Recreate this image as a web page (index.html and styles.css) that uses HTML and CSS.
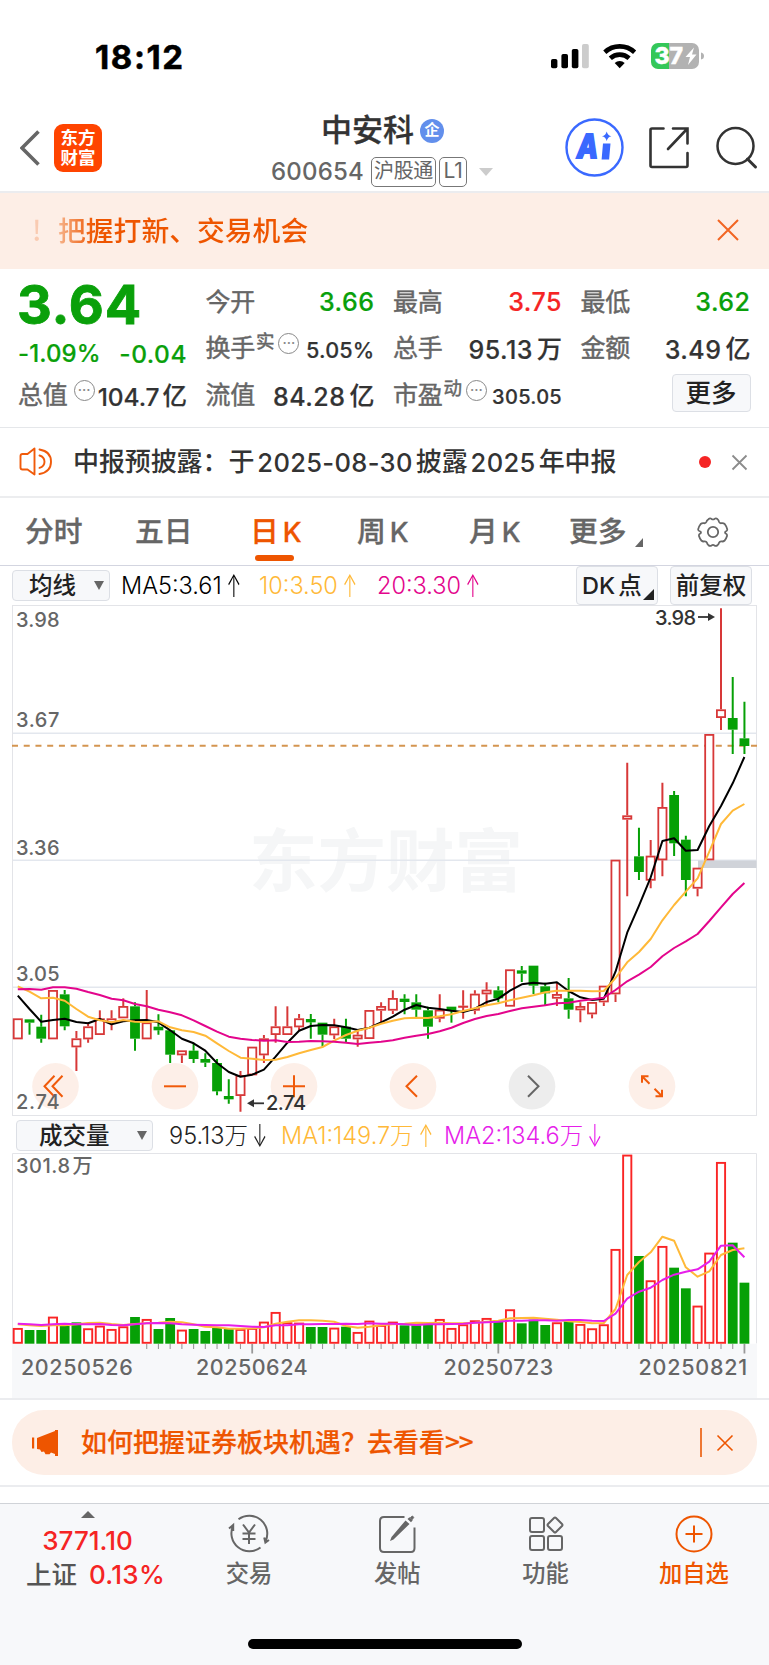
FILE: index.html
```html
<!DOCTYPE html>
<html lang="zh-CN">
<head>
<meta charset="utf-8">
<title>中安科 600654</title>
<link rel="stylesheet" href="styles.css">
</head>
<body>
<div class="statusbar">
  <span class="clock">18:12</span>
  <svg class="status-icons" width="154" height="30" viewBox="0 0 154 30">
    <rect x="1" y="17" width="6.4" height="9.3" rx="1.8"/><rect x="11.4" y="12" width="6.6" height="14.3" rx="1.8"/><rect x="21.8" y="7" width="6.6" height="19.3" rx="1.8"/><rect x="32" y="2" width="6.8" height="24.3" rx="1.8" fill="#ccc"/>
    <g fill="none" stroke="#000" stroke-width="4.6"><path d="M54.8 10.2a22 22 0 0 1 29.8 0"/><path d="M60.3 16.3a13.8 13.8 0 0 1 18.8 0"/></g><path d="M69.7 26.2l-5-5.2a7.4 7.4 0 0 1 10 0z"/>
    <path d="M109 1h-1a7 7 0 0 0-7 7v12a7 7 0 0 0 7 7h11V1z" fill="#34c759"/><path d="M119 1h23a7 7 0 0 1 7 7v12a7 7 0 0 1-7 7h-23z" fill="#b2b2b2"/><path d="M151 10.5q3 .5 3 3.5t-3 3.500z" fill="#b2b2b2"/>
    <text class="batt" x="104.500" y="22">37</text><path d="M144 5.500l-8.500 9.500h4.500l-2 8 8.500-10.500h-4.500z" fill="#fff"/>
  </svg>
</div>

<header class="header">
  <svg class="back" width="20" height="36" viewBox="0 0 20 36"><path d="M18.500 1.500L2 18l16.500 16.500" fill="none" stroke="#666" stroke-width="3.600"/></svg>
  <div class="logo">东方<br>财富</div>
  <div class="title">
    <div class="name">中安科<span class="badge">企</span></div>
    <div class="code">600654<span class="tag">沪股通</span><span class="tag l1">L1</span><i class="caret"></i></div>
  </div>
  <svg class="ai" width="59" height="59" viewBox="0 0 59 59"><circle cx="29.500" cy="29.500" r="28" fill="none" stroke="#3a69ff" stroke-width="2.400"/><text x="12" y="40" textLength="21" lengthAdjust="spacingAndGlyphs">A</text><path d="M38 25.500h7.500l-1.400 16h-7.500zM41.700 13.500q1 4.200 4.700 4.700-3.700 .6-4.700 4.800-1-4.200-4.700-4.800 3.700-.5 4.700-4.700z" fill="#3a69ff"/></svg>
  <svg class="share" width="42" height="44" viewBox="0 0 42 44"><path d="M15.500 2.500H4q-1.500 0-1.500 1.500v35.500q0 1.500 1.500 1.500h34q1.500 0 1.500-1.500V27M25 2.500h14.500V17.500M39 3L20 23" fill="none" stroke="#333" stroke-width="2.600" stroke-linecap="round"/></svg>
  <svg class="search" width="44" height="44" viewBox="0 0 44 44"><circle cx="20.500" cy="20" r="18" fill="none" stroke="#333" stroke-width="2.500"/><path d="M32.500 33l8 8" stroke="#333" stroke-width="3" stroke-linecap="round"/></svg>
</header>

<div class="banner"><span class="bang">!</span><span class="banner-text">把握打新、交易机会</span>
  <svg width="24" height="24" viewBox="0 0 24 24"><path d="M2 2l20 20M22 2L2 22" stroke="#f26522" stroke-width="2"/></svg>
</div>

<section class="quote">
  <div class="price">3.64</div>
  <div class="q r1 c2"><span>今开</span><b class="green">3.66</b></div>
  <div class="q r1 c3"><span>最高</span><b class="red">3.75</b></div>
  <div class="q r1 c4"><span>最低</span><b class="green">3.62</b></div>
  <div class="q r2 c1 green change"><b class="pct">-1.09%</b><b class="chg">-0.04</b></div>
  <div class="q r2 c2"><span>换手<sup>实</sup></span><i class="more-dot">···</i><b class="small">5.05%</b></div>
  <div class="q r2 c3"><span>总手</span><b>95.13<u>万</u></b></div>
  <div class="q r2 c4"><span>金额</span><b>3.49<u>亿</u></b></div>
  <div class="q r3 c1"><span>总值</span><i class="more-dot gap">···</i><b class="mid">104.7<u>亿</u></b></div>
  <div class="q r3 c2"><span>流值</span><b>84.28<u>亿</u></b></div>
  <div class="q r3 c3"><span>市盈<sup>动</sup></span><i class="more-dot">···</i><b class="small pe">305.05</b></div>
  <div class="more-btn">更多</div>
</section>

<div class="news">
  <svg width="36" height="30" viewBox="0 0 36 30" fill="none" stroke="#f05a0a" stroke-width="1.900" stroke-linejoin="round" stroke-linecap="round"><path d="M15.500 1.500L8.500 7H3.500Q1.500 7 1.500 9v11.500q0 2 2 2h5l7 5z"/><path d="M20.500 8.500q5 1.500 5 6.200t-5 6.200M20.500 2.500q11.500 2 11.500 12.200T20.500 27"/></svg>
  <span class="news-text">中报预披露：于<em>2025-08-30</em>披露<em>2025</em>年中报</span>
  <i class="dot"></i>
  <svg width="17" height="17" viewBox="0 0 17 17"><path d="M1.500 1.500l14 14M15.500 1.500l-14 14" stroke="#8c8c8c" stroke-width="1.800"/></svg>
</div>

<nav class="tabs">
  <span>分时</span><span>五日</span><span class="active">日<em>K</em></span><span>周<em>K</em></span><span>月<em>K</em></span><span>更多<i class="corner"></i></span>
  <svg width="32" height="32" viewBox="0 0 32 32" fill="none" stroke="#666" stroke-width="1.800"><circle cx="16" cy="16" r="5.200"/><path d="M11.500 3.200q1.500-1.500 3-.3 1.500 1 3 0 1.500-1.200 3 .3 1.200 1.100 1.600 2.800.6 1.500 2.400 1.200 2-.3 3.200.8 2 2.500 2.600 5.400.1 1.400-1.600 2.100-1.300 1 0 2 1.600.8 1.400 2.300-.8 2.900-2.700 5-1.100.9-2.700.6-1.900-.3-2.600 1.300-.3 1.700-1.600 2.500-1.500 1.300-3 .2-1.500-1-3 0-1.500 1.100-3-.2-1.300-.8-1.600-2.500-.7-1.600-2.600-1.300-1.600.3-2.700-.6-1.900-2.100-2.700-5-.2-1.500 1.400-2.300 1.300-1 0-2Q1 14.800 1.100 13.400q.6-2.900 2.600-5.400 1.200-1.100 3.200-.8 1.800.3 2.400-1.200.4-1.700 2.200-2.800z"/></svg>
</nav>

<div class="row ma-row">
  <div class="select">均线<i class="down"></i></div>
  <span class="ind k">MA5:3.61<s>↑</s></span><span class="ind y">10:3.50<s>↑</s></span><span class="ind p">20:3.30<s>↑</s></span>
  <div class="btn dk"><em>DK</em>点<i class="corner"></i></div><div class="btn fq">前复权</div>
</div>
<svg id="price-chart" class="chart" width="769" height="512" viewBox="0 0 769 512"></svg>

<div class="row vol-row">
  <div class="select wide">成交量<i class="down"></i></div>
  <span class="ind g">95.13万<s>↓</s></span><span class="ind y">MA1:149.7万<s>↑</s></span><span class="ind v">MA2:134.6万<s>↓</s></span>
</div>
<svg id="volume-chart" class="chart" width="769" height="245" viewBox="0 0 769 245"></svg>

<div class="promo-wrap"><div class="promo">
  <svg width="32" height="28" viewBox="0 0 32 28" fill="#ee5500"><path d="M1 8.500h2.200v11H1zM6 9L24 2V1h3v26h-3v-2l-4-1.500-1.500 1.700h-4L13 22.500 10.500 23 9 20.500l-3-.5z"/></svg>
  <span class="promo-text">如何把握证券板块机遇？去看看<em>&gt;&gt;</em></span>
  <i class="bar"></i>
  <svg width="18" height="18" viewBox="0 0 18 18"><path d="M1.500 1.500l15 15M16.500 1.500l-15 15" stroke="#ee5500" stroke-width="1.600"/></svg>
</div></div>

<footer class="bottom">
  <div class="index"><i class="up"></i><b>3771.10</b><div>上证<b>0.13%</b></div></div>
  <div class="item"><svg width="44" height="40" viewBox="0 0 44 40" fill="none" stroke="#666" stroke-width="2"><path d="M11.500 5.300A18 18 0 0 1 38.500 27.500M33.500 33.500A18 18 0 0 1 6.200 11.500M2 14.500l4.200-3.500 0 6M37.200 23.500l1.200 5 3.600-2.500"/><path d="M16 10.500l6 8 6-8M22 18.500v11.500M15.500 19.500h13M15.500 25h13"/></svg>交易</div>
  <div class="item"><svg width="44" height="40" viewBox="0 0 44 40" fill="none" stroke="#666" stroke-width="2"><path d="M29.500 3H9Q5 3 5 7v27q0 4 4 4h27q3.500 0 3.500-4V13.500"/><path d="M30.500 6.500l4 3.500-16 15.500-3.500 1.500 1.500-4zM32.500 5l2-1.800 3.200 3L36 8.300z" fill="#666" stroke="none"/><path d="M35.500 3.500l2-1.500 1.200 1.500-1.500 2z" fill="#666" stroke-width="1"/></svg>发帖</div>
  <div class="item"><svg width="44" height="40" viewBox="0 0 44 40" fill="none" stroke="#666" stroke-width="2"><rect x="6" y="4" width="14" height="14" rx="2"/><rect x="6" y="22" width="14" height="14" rx="2"/><rect x="24" y="22" width="14" height="14" rx="2"/><path d="M30 4q1-1 2 0l6 6q1 1 0 2l-6 6q-1 1-2 0l-6-6q-1-1 0-2z"/></svg>功能</div>
  <div class="item add"><svg width="44" height="40" viewBox="0 0 44 40" fill="none" stroke="#ee5500" stroke-width="2"><circle cx="22" cy="20" r="17.500"/><path d="M22 11.500v17M13.500 20h17"/></svg>加自选</div>
  <i class="home"></i>
</footer>
<script src="chart.js"></script>
</body>
</html>
```
FILE: styles.css
```css
* { box-sizing: border-box; }
body { margin: 0; width: 769px; height: 1665px; overflow: hidden; background: #fff; color: #333; font-family: Inter, "Noto Sans CJK SC", sans-serif; font-weight: 500; }
b { font-weight: 500; }
em, i { font-style: normal; }
u, s { text-decoration: none; }
svg { display: block; flex: none; }
.green { color: #0aa00a; }
.red { color: #f52424; }

.statusbar { height: 104px; padding: 10px 65px 0 95px; display: flex; align-items: center; justify-content: space-between; }
.clock { font-size: 33px; font-weight: 700; letter-spacing: 1.600px; color: #000; -webkit-text-stroke: .5px #000; }
.batt { font: 800 23px Inter, sans-serif; fill: #fff; stroke: #fff; stroke-width: .5px; }

.header { height: 89px; border-bottom: 2px solid #ebecef; display: flex; align-items: center; position: relative; padding-left: 20px; }
.logo { width: 48px; height: 48px; margin-left: 14px; border-radius: 9px; background: #ff4400; color: #fff; font-size: 17.5px; line-height: 20px; font-weight: 700; text-align: center; padding-top: 4px; }
.title { margin-left: 169px; width: 225px; height: 80px; display: flex; flex-direction: column; }
.name { margin-left: 50px; font-size: 31px; line-height: 42px; height: 46px; padding-top: 1px; display: flex; align-items: center; white-space: nowrap; -webkit-text-stroke: .3px #333; }
.badge { width: 24px; height: 24px; margin-left: 6px; margin-top: 2px; border-radius: 50%; background: #628fec; color: #fff; font-size: 15px; font-weight: 700; line-height: 22px; text-align: center; -webkit-text-stroke: 0; }
.code { display: flex; align-items: center; font-size: 24px; letter-spacing: .2px; color: #666; height: 32px; margin-top: 4px; white-space: nowrap; }
.tag { border: 1.5px solid #777; border-radius: 5px; font-size: 20px; font-weight: 400; line-height: 26px; height: 30px; width: 65px; text-align: center; margin-left: 7px; letter-spacing: -.3px; }
.tag.l1 { width: 28px; margin-left: 3px; font-size: 21px; }
.caret { margin-left: 12px; border: 7px solid transparent; border-top: 8px solid #ccc; border-bottom: 0; }
.ai { margin-left: 69px; }
.ai text { font: italic 800 33px Inter, sans-serif; fill: #3a69ff; stroke: #3a69ff; stroke-width: 2px; }
.share { margin-left: 24px; }
.search { margin-left: 25px; }

.banner { height: 76px; background: #fdeee6; color: #ee5500; display: flex; align-items: center; padding-left: 32px; font-size: 27.800px; }
.bang { width: 26px; opacity: .22; margin-top: -4px; font-family: "Noto Sans CJK SC", sans-serif; }
.banner-text { width: 658px; margin-top: -4px; background: linear-gradient(90deg, #f6b48c, #ee5500 36px); background-clip: text; -webkit-background-clip: text; color: transparent; }
.banner svg { margin-top: -2px; }

.quote { height: 159px; border-bottom: 1px solid #e5e7ea; padding: 10px 18px 0 19px; display: grid; grid-template-columns: 168px 168px 168px 169px; column-gap: 19.500px; grid-template-rows: 45px 47px 47px; }
.price { grid-row: 1; grid-column: 1; color: #0aa00a; font-size: 54px; font-weight: 700; line-height: 54px; margin: -1px 0 0 -2px; letter-spacing: .8px; -webkit-text-stroke: .8px #0aa00a; }
.q { display: flex; align-items: center; font-size: 25px; white-space: nowrap; }
.q > span { color: #666; font-weight: 400; letter-spacing: -.2px; margin: -3px 0 0 -1px; -webkit-text-stroke: .45px #666; }
.q > b { margin-left: auto; letter-spacing: .5px; -webkit-text-stroke: .2px currentColor; }
.q sup { font-size: 18.500px; line-height: 0; vertical-align: 9px; margin-left: 1px; }
.q u { margin-left: 4px; letter-spacing: 0; position: relative; top: -1px; }
.q b.small { font-size: 21.600px; padding-top: 4px; letter-spacing: .2px; }
.q b.mid { font-size: 24.500px; letter-spacing: -.1px; padding-top: 1px; }
.q b.mid u { margin-left: 3px; }
.q b.small.pe { font-size: 20px; letter-spacing: .3px; padding-top: 5px; }
.q.change { padding-top: 12px; }
.q .pct { margin-left: -1px; font-size: 24px; letter-spacing: .1px; margin-top: -1px; }
.q .chg { font-size: 24.500px; }
.more-dot { width: 21px; height: 21px; border: 1.600px solid #888; border-radius: 50%; margin: -9px 0 0 4px; font-size: 14px; line-height: 17px; text-align: center; color: #888; letter-spacing: 0; }
.more-dot.gap { margin-left: 6px; }
.r1 { grid-row: 1; } .r2 { grid-row: 2; } .r3 { grid-row: 3; }
.c1 { grid-column: 1; } .c2 { grid-column: 2; } .c3 { grid-column: 3; } .c4 { grid-column: 4; }
.more-btn { grid-row: 3; grid-column: 4; justify-self: end; align-self: center; width: 79px; height: 38px; margin-right: 0; margin-top: -4px; border: 1px solid #dcdfe5; border-radius: 4px; background: #f7f8fa; font-size: 25.500px; line-height: 35px; text-align: center; color: #222; }

.news { height: 70px; border-bottom: 2px solid #ecedef; display: flex; align-items: center; padding: 0 21px 0 19px; }
.news-text { margin: -5px 0 0 18px; width: 627px; font-size: 26px; white-space: nowrap; letter-spacing: -.1px; }
.news-text em { font-size: 25.500px; letter-spacing: .35px; margin: 0 3px; position: relative; top: 1px; }
.dot { width: 12px; height: 12px; border-radius: 50%; background: #f52424; margin-right: 20px; }

.tabs { height: 68px; border-bottom: 1px solid #d3d5e0; display: grid; grid-template-columns: 110px 115px 107px 112px 100px 128px 32px; padding-left: 25px; align-items: center; font-size: 28.800px; color: #666; }
.tabs span { height: 100%; line-height: 67px; position: relative; white-space: nowrap; -webkit-text-stroke: .3px currentColor; }
.tabs em { margin-left: 4px; font-size: 27.500px; }
.tabs .active { color: #ee5500; }
.tabs .active::after { content: ""; position: absolute; left: 5px; bottom: 5px; width: 39px; height: 6px; border-radius: 3px; background: #ee5500; }
.corner { display: inline-block; border-left: 8px solid transparent; border-bottom: 9px solid #666; margin-left: 8px; vertical-align: -5px; }

.row { display: flex; align-items: center; position: relative; }
.ma-row { height: 38px; padding-left: 12px; }
.select { width: 98px; height: 31px; border: 1px solid #dcdfe5; border-radius: 4px; background: #f7f8fa; font-size: 23.500px; line-height: 27px; padding-left: 16px; color: #222; display: flex; align-items: center; justify-content: space-between; padding-right: 5px; margin-top: 1px; }
.select.wide { width: 137px; padding-left: 22px; padding-right: 5px; }
.down { border: 5px solid transparent; border-top: 9px solid #666; border-bottom: 0; }
.ind { font-size: 23.500px; font-weight: 300; white-space: nowrap; padding-top: 1px; }
.ma-row .ind { width: 138px; margin-left: 11px; }
.ma-row .y { width: 107px; margin-left: 0; } .ma-row .p { width: 199px; margin-left: 11px; }
.ind s { display: inline-block; margin-left: 2px; transform: scale(.75, 1.3); font-weight: 300; }
.k { color: #000; } .g { color: #222; } .y { color: #ffb938; } .p { color: #e3058c; } .v { color: #e61eea; }
.btn { height: 39px; border: 1px solid #dcdfe5; border-radius: 4px; background: #f7f8fa; font-size: 23.500px; line-height: 37px; color: #222; text-align: center; white-space: nowrap; }
.dk { width: 82px; text-align: left; padding-left: 5px; }
.dk em { margin-right: 3px; }
.dk .corner { margin-left: 1px; border-left-width: 11px; border-bottom: 11px solid #222; vertical-align: -6px; }
.fq { width: 82px; margin-left: 12px; }
.vol-row { height: 37px; padding-left: 16px; }
.vol-row .ind { margin-left: 16px; width: 96px; padding-top: 0; margin-top: -1px; }
.vol-row .y { width: 147px; } .vol-row .v { width: 160px; }

.chart text { font-family: Inter, "Noto Sans CJK SC", sans-serif; font-size: 20px; font-weight: 500; fill: #666; }
.chart .date { font-size: 21.500px; letter-spacing: .3px; }
.chart .mark { fill: #333; }
.chart .watermark { font-size: 68.500px; font-weight: 700; fill: #f5f6f7; font-family: "Noto Sans CJK SC", sans-serif; }

.promo-wrap { height: 89px; border-top: 2px solid #ebecef; border-bottom: 2px solid #ebecef; padding: 10px 12px 0; }
.promo { height: 65px; border-radius: 32px; background: #fdeee6; display: flex; align-items: center; padding-left: 19px; color: #ee5500; }
.promo-text { width: 619px; margin: -4px 0 0 18px; font-size: 26px; white-space: nowrap; -webkit-text-stroke: .2px #ee5500; }
.promo-text em { font-family: "Noto Sans CJK SC", sans-serif; letter-spacing: -1px; }
.bar { width: 1.500px; height: 29px; background: #ee7733; margin-right: 14px; }

.bottom { margin-top: 16px; height: 162px; border-top: 1px solid #d0d3d8; background: #f7f8fa; display: grid; grid-template-columns: 175px repeat(4, 148.250px); position: relative; color: #666; }
.index { padding-top: 7px; display: flex; flex-direction: column; align-items: center; font-size: 25.500px; line-height: 32px; }
.index b { color: #f52424; font-size: 26px; line-height: 31px; margin-top: 7px; }
.index > div { color: #555; padding-left: 16px; white-space: nowrap; margin-top: 3px; line-height: 31px; }
.index div b { margin-left: 12px; letter-spacing: .3px; }
.up { border: 7px solid transparent; border-bottom: 7px solid #666; border-top: 0; }
.item { display: flex; flex-direction: column; align-items: center; font-size: 23.300px; line-height: 30px; padding-top: 10px; }
.item svg { margin-bottom: 5px; }
.add { color: #ee5500; }
.home { position: absolute; left: 248px; bottom: 16px; width: 274px; height: 10px; border-radius: 5px; background: #000; }
```
FILE: chart.js
```js
// Candles are [type, high, body top, body bottom, low]; all values are thirds of a pixel.
const X0 = 17.8, STEP = 11.72;
const cx = i => X0 + i * STEP;

const segments = [
  { offset: 1068, rows: `R 175 175 238 238|G 178 178 188 224|G 164 200 236 248|R 90 90 238 238|G 90 103 199 211|R 213 235 262 333|R 188 199 238 248|R 151 175 225 225|R 151 175 190 211|R 115 138 175 175|G 127 139 236 272|R 90 187 238 238|G 163 200 211 224|G 211 211 284 309|R 271 271 286 309|G 248 272 297 309|G 280 297 308 321|G 297 309 394 406|G 358 408 418 431|R 333 345 408 455|R 260 260 346 346|R 225 235 286 309|R 139 199 225 248|R 139 199 225 225` },
  { offset: 1008, rows: `R 222 235 262 272|G 222 237 247 296|G 248 248 284 320|R 236 259 286 297|G 236 260 296 306|R 272 284 298 320|R 210 210 297 297|R 187 198 212 248|R 151 174 212 222|G 163 176 186 223|G 163 187 209 231|G 200 211 260 296|R 163 209 236 247|G 200 200 212 248|R 151 197 201 236|R 151 161 212 223|R 127 149 163 198|G 139 151 175 187|R 88 88 200 200|G 78 91 101 126|G 77 77 137 162|G 128 139 160 196|R 128 162 176 198|G 114 175 209 236|R 187 198 211 247` },
  { offset: -12, rows: `R 1206 1206 1243 1255|R 1157 1157 1207 1218|R 779 779 1183 1206|R 488 646 659 889|G 683 769 816 840|R 720 767 842 865|R 548 621 781 829|G 573 585 730 768|G 707 719 840 889|R 803 803 866 889|R 402 402 781 781|R 25 328 354 390|G 231 354 389 462|G 305 415 438 462` }
];
const candles = segments.flatMap(s => s.rows.split('|').map(r => {
  const [type, ...v] = r.split(' ');
  return [type, ...v.map(n => (+n + s.offset) / 3)];
}));

const averages = [
  ['#000', [107,147,185,180,176,186,190,177,193,184,181,180,187,211,236,250,272,309,336,350,344,329,290,248], [272,258,255,256,262,270,263,247,230,209,195,203,207,212,216,206,186,176,152,133,128,131,127,153,172], [1200,1196,1115,998,917,832,723,715,752,750,678,618,550,471]],
  ['#ffb938', [79,95,115,113,122,147,170,181,187,180,185,186,184,202,211,216,227,250,273,293,296,300,299,291], [340,330,321,302,285,272,263,251,242,235,233,234,229,223,213,205,196,190,181,173,166,157,152,152,152], [1174,1173,1134,1087,1056,1017,961,915,875,835,755,672,632,612]],
  ['#e3058c', [88,87,89,82,82,86,96,105,116,121,132,139,149,157,166,181,198,215,230,236,240,242,241,246], [305,303,304,305,308,312,308,305,301,293,287,282,274,263,249,237,228,222,213,205,200,196,190,188,182], [1198,1193,1170,1144,1124,1101,1069,1044,1024,1002,963,922,882,849]]
];
const line = (ys, color) => `<polyline fill="none" stroke="${color}" stroke-width="2" stroke-linejoin="round" points="${ys.map((y, i) => cx(i).toFixed(1) + ',' + y.toFixed(1)).join(' ')}"/>`;

let p = '<text class="watermark" x="249" y="282">东方财富</text>';
p += '<path d="M12 129.200H757M12 256.200H757M12 383.200H757" stroke="#e3e7ee" stroke-width="1.500"/><rect x="12.500" y="1.500" width="744" height="510" fill="none" stroke="#e3e4e8"/>';
p += '<rect x="698" y="256.500" width="58.500" height="7.500" fill="#d0d3d9"/><path d="M12 141.700H757" stroke="#d49550" stroke-width="1.900" stroke-dasharray="6 5.730"/>';
candles.forEach(([type, h, t, b, l], i) => {
  const x = cx(i), red = type === 'R', c = red ? '#d73838' : '#06a006';
  p += `<path d="M${x} ${h}V${t}M${x} ${b}V${l}" stroke="${c}" stroke-width="2"/>`;
  if (red) {
    const height = Math.max(b - t - 1.8, .3);
    p += `<rect x="${x - 4.1}" y="${t + .9}" width="8.2" height="${height}" fill="#fff" stroke="${c}" stroke-width="1.8"/>`;
  } else p += `<rect x="${x - 4.9}" y="${t}" width="9.8" height="${b - t}" fill="${c}"/>`;
});
averages.forEach(([color, a, b, c]) => {
  p += line([...a.map(v => (v + 1068) / 3), ...b.map(v => (v + 1008) / 3), ...c.map(v => (v - 12) / 3)], color);
});
[['M-1 -10.500L-11 0L-1 10.500M7 -10.500L-3 0L7 10.500', 55.5], ['M-11 0H11', 175], ['M-11 0H11M0 -11V11', 294], ['M4 -10.500L-6.500 0L4 10.500', 413], ['M-4 -10.500L6.500 0L-4 10.500', 532], ['M-2.500 -2.500L-10 -10M-10 -3.500V-10H-3.500M2.500 2.500L10 10M10 3.500V10H3.500', 652]].forEach(([d, x], i) => {
  const grey = i === 4;
  p += `<g transform="translate(${x} 482.3)"><circle r="23.3" fill="${grey ? '#e8e8e8' : '#fdebe2'}" fill-opacity=".8"/><path d="${d}" fill="none" stroke="${grey ? '#666' : '#f05a0a'}" stroke-width="2"/></g>`;
});
[['3.98', 22.5], ['3.67', 122.5], ['3.36', 250.6], ['3.05', 377.4], ['2.74', 505]].forEach(([t, y]) => { p += `<text x="16" y="${y}" textLength="43.5">${t}</text>`; });
p += '<text class="mark" x="655" y="20.500" textLength="41">3.98</text><path d="M698 13h12" stroke="#333" stroke-width="1.800"/><path d="M708 9l7 4-7 4z" fill="#333"/>';
p += '<text class="mark" x="266" y="506" textLength="40">2.74</text><path d="M252 499.300h12" stroke="#333" stroke-width="1.800"/><path d="M254 495.300l-7 4 7 4z" fill="#333"/>';
document.getElementById('price-chart').innerHTML = p;

const volumes = 'R654 G660 G660 R620 G648 G637 R655 R647 R657 R649 G621 R627 G657 G624 R659 G657 G663 G653 G657 R657 R654 R635 R606 R637 R638 G651 G651 R653 G650 R666 R632 R645 R635 G646 G646 G645 R627 R654 R643 R631 R624 G631 R598 G640 G629 G645 R637 G634 R642 R655 R643 R417 R134 G438 R511 R408 G473 G535 R587 R428 R156 G398 G518'.split(' ');
const volume1 = [643,646,648,646,646,643,639,638,642,645,642,640,638,635,637,643,650,652,656,656,655,652,641,635,631,631,632,635,648,653,650,646,643,641,638,639,638,640,640,638,635,632,625,624,623,626,629,634,636,640,639,597,495,456,427,380,392,472,500,484,435,420,415];
const volume2 = [641,643,645,643,641,643,643,642,645,646,643,640,639,640,643,644,645,646,646,648,650,651,646,646,643,643,642,642,641,642,640,641,641,643,645,643,643,642,641,638,637,635,632,632,631,631,632,630,630,632,633,611,566,545,533,510,494,485,478,455,407,406,442];
const vy = v => (+v - 129) / 3;
let s = '<path d="M12.500 190.500V.500H756.500V190.500" fill="none" stroke="#e3e4e8"/><rect x="12" y="190.700" width="745" height="54.300" fill="#f7f8fa"/>';
volumes.forEach((v, i) => {
  const x = cx(i), y = vy(v.slice(1));
  s += v[0] === 'R'
    ? `<rect x="${x - 4.1}" y="${y + .9}" width="8.2" height="${188.9 - y}" fill="#fff" stroke="#fa2525" stroke-width="1.9"/>`
    : `<rect x="${x - 4.9}" y="${y}" width="9.8" height="${190.7 - y}" fill="#06a006"/>`;
  if (i > 10) s += `<path d="M${x} 191V${i % 21 === 20 ? 200.5 : 196}" stroke="#999" stroke-width="${i % 21 === 20 ? 1.8 : 1.1}"/>`;
});
s += line(volume1.map(vy), '#ffb938') + line(volume2.map(vy), '#e61eea');
s += '<text x="16" y="19.700" textLength="54">301.8</text><text x="72.500" y="19.700">万</text>';
[['20250526', 21, 112], ['20250624', 196, 112], ['20250723', 443.5, 110], ['20250821', 638.5, 109]].forEach(([t, x, w]) => { s += `<text class="date" x="${x}" y="221.500" textLength="${w}">${t}</text>`; });
document.getElementById('volume-chart').innerHTML = s;
```
